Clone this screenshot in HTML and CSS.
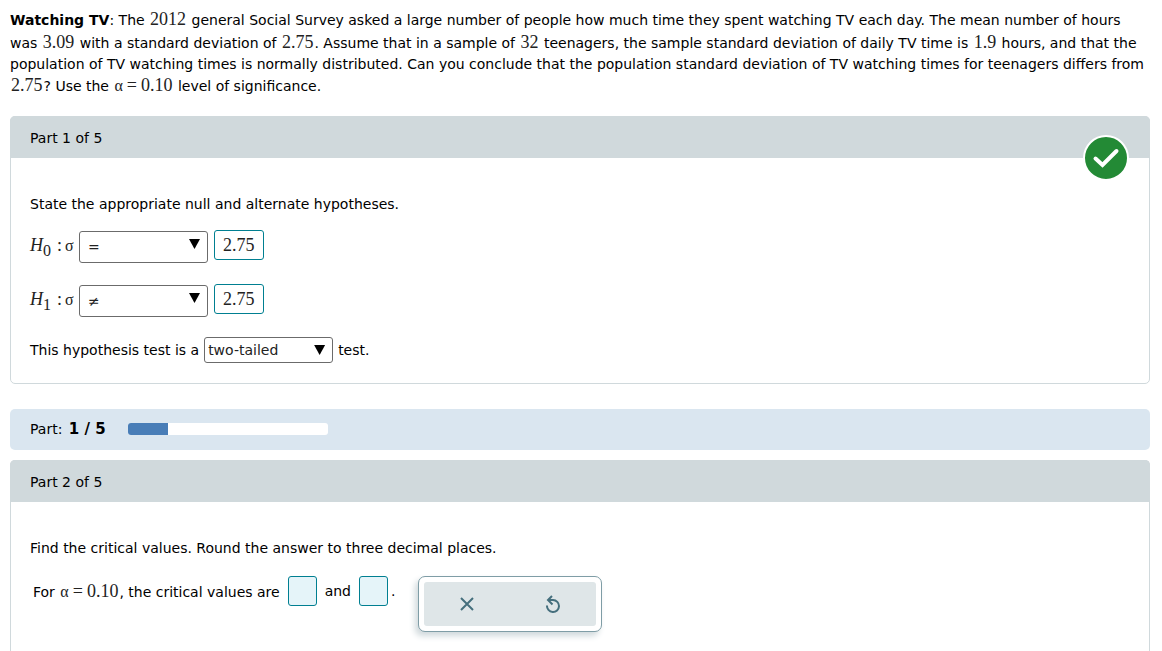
FILE: index.html
```html
<!DOCTYPE html>
<html lang="en">
<head>
  <meta charset="UTF-8" />
  <meta name="viewport" content="width=device-width, initial-scale=1.0" />
  <title>Watching TV</title>
  <link rel="stylesheet" href="styles.css">
</head>
<body>
  <p class="intro">
    <b>Watching TV</b>: The <span class="num">2012</span> general Social Survey asked a large number of people how much time they spent watching TV each day. The mean number of hours<br>
    was <span class="num">3.09</span> with a standard deviation of <span class="num">2.75</span>. Assume that in a sample of <span class="num">32</span> teenagers, the sample standard deviation of daily TV time is <span class="num">1.9</span> hours, and that the<br>
    population of TV watching times is normally distributed. Can you conclude that the population standard deviation of TV watching times for teenagers differs from<br>
    <span class="num">2.75</span>? Use the <span class="num"><span class="greek">α</span><span class="eq">=</span>0.10</span> level of significance.
  </p>

  <section class="part">
    <h2 class="part-header">Part 1 of 5</h2>
    <span class="badge">
      <svg viewBox="0 0 46 46" width="46" height="46">
        <circle cx="23" cy="23" r="22" fill="#238a35" stroke="#fff" stroke-width="2" />
        <path d="M12.5 23.5 L19.5 30 L33.5 16" fill="none" stroke="#fff" stroke-width="4" stroke-linecap="round" />
      </svg>
    </span>
    <div class="part-body">
      <p>State the appropriate null and alternate hypotheses.</p>
      <div class="hypothesis">
        <label class="math" for="h0-sign"><i>H</i><sub>0</sub><span class="colon">:</span><span class="greek">σ</span></label>
        <span class="select tall">
          <select id="h0-sign">
            <option>=</option>
            <option>≠</option>
          </select>
        </span>
        <input class="answer" type="text" value="2.75" aria-label="Null hypothesis value">
      </div>
      <div class="hypothesis">
        <label class="math" for="h1-sign"><i>H</i><sub>1</sub><span class="colon">:</span><span class="greek">σ</span></label>
        <span class="select tall">
          <select id="h1-sign">
            <option>≠</option>
            <option>=</option>
          </select>
        </span>
        <input class="answer" type="text" value="2.75" aria-label="Alternate hypothesis value">
      </div>
      <div class="test-type">
        <label for="tails">This hypothesis test is a</label>
        <span class="select">
          <select id="tails">
            <option>two-tailed</option>
            <option>left-tailed</option>
            <option>right-tailed</option>
          </select>
        </span>
        <span>test.</span>
      </div>
    </div>
  </section>

  <div class="progress">
    <span>Part: <b>1 / 5</b></span>
    <div class="track"><div class="fill" style="width: 20%"></div></div>
  </div>

  <section class="part part-open">
    <h2 class="part-header">Part 2 of 5</h2>
    <div class="part-body">
      <p>Find the critical values. Round the answer to three decimal places.</p>
      <div class="critical">
        <div class="values">
          <label for="cv1">For <span class="num"><span class="greek">α</span><span class="eq">=</span>0.10</span>, the critical values are</label>
          <input class="blank" id="cv1" type="text">
          <label for="cv2">and</label>
          <input class="blank" id="cv2" type="text">
          <span class="stop">.</span>
        </div>
        <div class="toolbar">
          <button type="button" aria-label="Clear">
            <svg viewBox="0 0 16 16" width="16" height="16">
              <path d="M2 2 L14 14 M14 2 L2 14" />
            </svg>
          </button>
          <button type="button" aria-label="Reset">
            <svg viewBox="0 0 16 18" width="16" height="18">
              <path d="M2 10.5 A6 6 0 1 0 8 5 H3.5 M7 1 L3 5 L7.5 9.5" />
            </svg>
          </button>
        </div>
      </div>
    </div>
  </section>
</body>
</html>
```

FILE: styles.css
```css
* {
  margin: 0;
  padding: 0;
  box-sizing: border-box;
}
body {
  padding: 8px 12px 0 10px;
  background: #fff;
  color: #000;
  font-family: Verdana, "DejaVu Sans", sans-serif;
  font-size: 14px;
  line-height: 20px;
  overflow: hidden;
}
.intro {
  white-space: nowrap;
  margin-bottom: 19px;
}
.num,
.math {
  font-family: "Liberation Serif", "Times New Roman", serif;
  font-size: 18px;
  color: #222;
}
.num {
  margin: 0 1px;
  line-height: 23px;
}
.greek {
  font-size: 16px;
}
.eq {
  margin: 0 4px;
}
.part {
  position: relative;
  border: 1px solid #d0d9dc;
  border-radius: 5px;
}
.part-header {
  margin: -1px -1px 0;
  padding: 12px 20px 10px;
  border-radius: 5px 5px 0 0;
  background: #d0d9dc;
  font-size: 14px;
  font-weight: normal;
}
.badge {
  position: absolute;
  top: 18px;
  right: 20px;
}
.badge svg {
  display: block;
}
.part-body {
  padding: 36px 19px 20px;
}
.hypothesis {
  display: flex;
  align-items: flex-start;
  margin-top: 16px;
  height: 38px;
}
.math {
  width: 49px;
  line-height: 30px;
}
.math sub {
  line-height: 0;
  font-size: 16px;
  vertical-align: -5px;
}
.colon {
  margin: 0 3px 0 6px;
}
.select {
  position: relative;
  width: 129px;
  height: 26px;
}
.select::after {
  content: "";
  position: absolute;
  top: 8px;
  right: 8px;
  width: 11px;
  height: 10px;
  background: #000;
  clip-path: polygon(0 0, 100% 0, 50% 100%);
  pointer-events: none;
}
.select select {
  width: 100%;
  height: 100%;
  padding: 0 20px 0 3px;
  border: 1px solid #6b6b6b;
  border-radius: 3px;
  appearance: none;
  background: #fff;
  color: #222;
  font: inherit;
}
.select.tall {
  height: 32px;
  margin-top: 1px;
}
.select.tall select {
  padding-left: 8px;
}
.answer,
.blank {
  height: 30px;
  border: 1px solid #007f91;
  border-radius: 3px;
  font-family: "Liberation Serif", "Times New Roman", serif;
  font-size: 18px;
  color: #222;
}
.answer {
  width: 50px;
  margin-left: 6px;
  padding-left: 8px;
}
.blank {
  width: 29px;
  background: #e5f4f9;
}
.test-type {
  display: flex;
  align-items: center;
  gap: 5px;
  margin-top: 15px;
}
.progress {
  display: flex;
  align-items: center;
  gap: 22px;
  margin: 25px 0 10px;
  padding: 10px 20px 11px;
  border-radius: 5px;
  background: #dae6f0;
}
.progress b {
  margin-left: 2px;
  font-size: 15px;
}
.track {
  width: 200px;
  height: 12px;
  border-radius: 3px;
  background: #fff;
  overflow: hidden;
}
.fill {
  height: 100%;
  background: #487db7;
}
.part-open {
  border-bottom: none;
  border-radius: 5px 5px 0 0;
}
.critical {
  display: flex;
  align-items: flex-start;
  margin-top: 18px;
  padding-left: 3px;
}
.values {
  display: flex;
  align-items: center;
  gap: 8px;
  white-space: nowrap;
}
.stop {
  margin-left: -5px;
}
.toolbar {
  display: flex;
  width: 184px;
  height: 56px;
  margin-left: 23px;
  padding: 5px;
  border: 1px solid #7f9da6;
  border-radius: 7px;
  background: #fff;
  box-shadow: -3px 4px 6px #d0d9dc;
}
.toolbar button {
  flex: 1;
  display: flex;
  align-items: center;
  justify-content: center;
  border: none;
  background: #dfe6e8;
}
.toolbar button:first-child {
  border-radius: 3px 0 0 3px;
}
.toolbar button:last-child {
  border-radius: 0 3px 3px 0;
}
.toolbar path {
  fill: none;
  stroke: #456f7d;
  stroke-width: 2;
}
```
